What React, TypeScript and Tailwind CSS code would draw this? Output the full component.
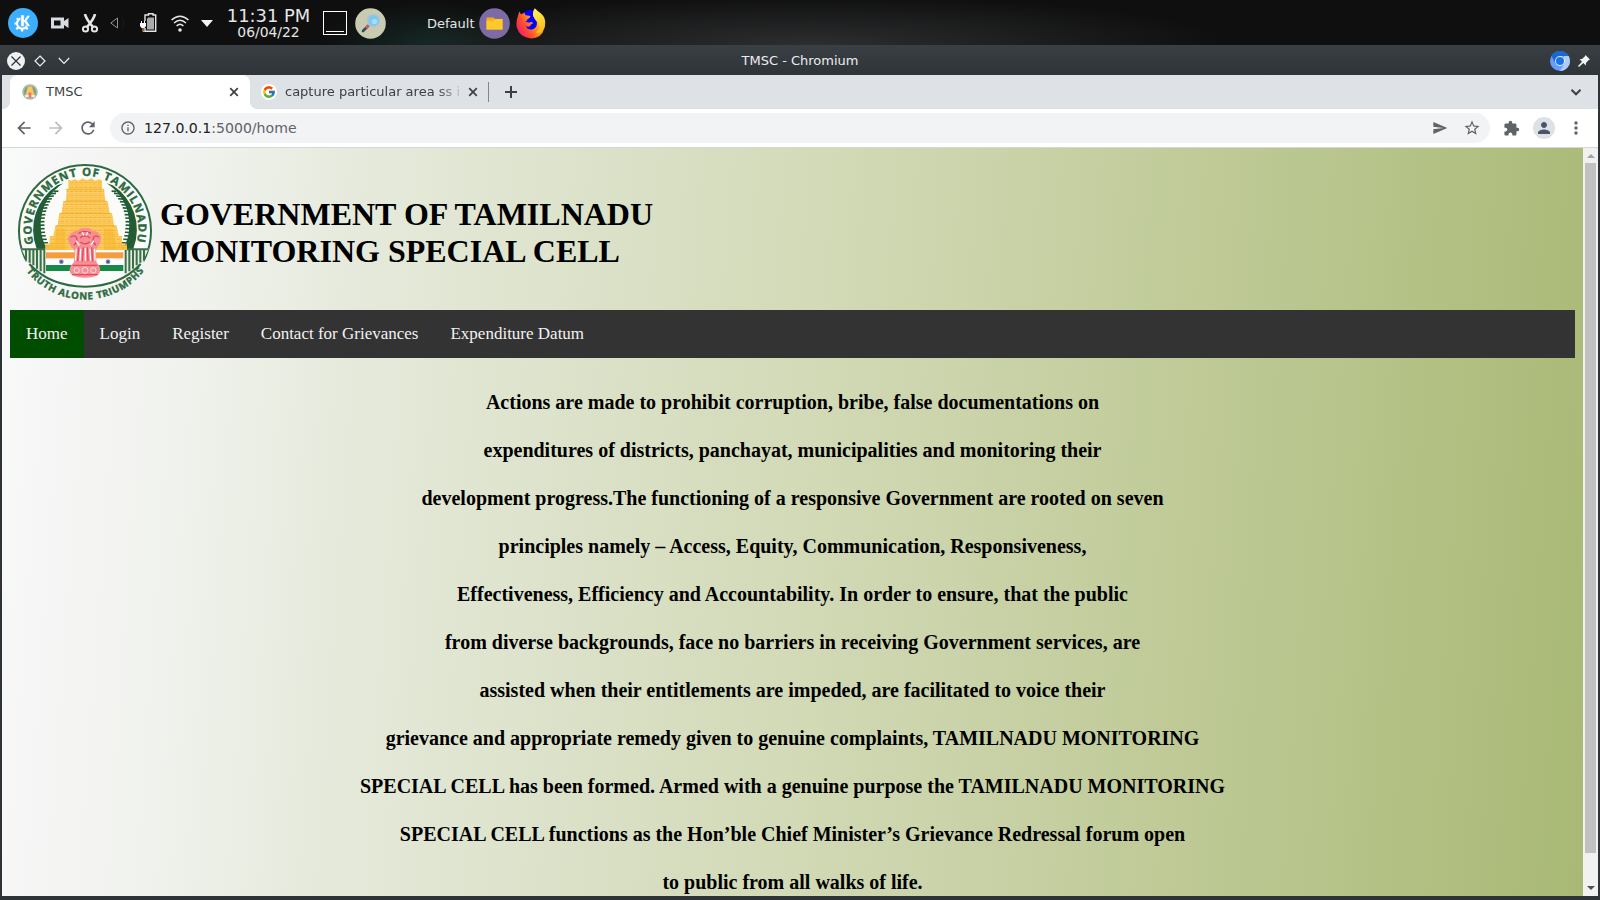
import React from "react";
import { MdArrowBack, MdArrowForward, MdRefresh, MdInfoOutline, MdSend, MdStarBorder, MdExtension, MdPerson, MdMoreVert } from "react-icons/md";
import { FcGoogle } from "react-icons/fc";

const lines = [
  "Actions are made to prohibit corruption, bribe, false documentations on",
  "expenditures of districts, panchayat, municipalities and monitoring their",
  "development progress.The functioning of a responsive Government are rooted on seven",
  "principles namely – Access, Equity, Communication, Responsiveness,",
  "Effectiveness, Efficiency and Accountability. In order to ensure, that the public",
  "from diverse backgrounds, face no barriers in receiving Government services, are",
  "assisted when their entitlements are impeded, are facilitated to voice their",
  "grievance and appropriate remedy given to genuine complaints, TAMILNADU MONITORING",
  "SPECIAL CELL has been formed. Armed with a genuine purpose the TAMILNADU MONITORING",
  "SPECIAL CELL functions as the Hon’ble Chief Minister’s Grievance Redressal forum open",
  "to public from all walks of life.",
];

const nav = ["Home", "Login", "Register", "Contact for Grievances", "Expenditure Datum"];

function spikes(side: number) {
  const out: string[] = [];
  for (let i = 0; i <= 17; i++) {
    const a = ((-50 + i * 4.2) * Math.PI) / 180;
    const x1 = 255 + side * Math.cos(a) * 146;
    const y1 = 240 + Math.sin(a) * 146;
    const len = 14 + i * 0.9;
    out.push(`M${x1.toFixed(1)} ${y1.toFixed(1)}L${(x1 - side * len).toFixed(1)} ${(y1 - 1).toFixed(1)}`);
  }
  return out.join("");
}

function Emblem({ className }: { className: string }) {
  return (
    <svg viewBox="51 37 411 417" className={className}>
      <defs>
        <path id="arcTop" d="M101 285A160 160 0 1 1 409 285" />
        <path id="arcBottom" d="M80 368A218 209 0 0 0 430 368" />
        <pattern id="stone" width="14" height="13" patternUnits="userSpaceOnUse">
          <rect width="14" height="13" fill="#fabb33" />
          <path d="M0 2H14M3 5V11M8 5V9M12 6V12" stroke="#fce0a0" strokeWidth="2" />
          <path d="M0 12H9" stroke="#eaa51d" strokeWidth="1.5" />
        </pattern>
      </defs>
      <circle cx="255" cy="240" r="178" fill="#fcfdfb" />
      <path d="M80 338A198 197 0 1 1 430 338" fill="#fbfcfa" stroke="#2c6a40" strokeWidth="6" />
      <path d="M64 300H130V372A190 190 0 0 1 82 340ZM446 300H380V372A190 190 0 0 0 428 340Z" fill="#e6ece1" />
      <path d="M66 302H136M374 302H444M78 302V334M89 302V342M100 302V350M111 302V360M122 302V368M133 302V374M432 302V334M421 302V342M410 302V350M399 302V360M388 302V368M377 302V374" stroke="#3a7048" strokeWidth="6" fill="none" />
      <path d="M88 346Q150 413 255 414Q360 413 422 346" fill="none" stroke="#2c6a40" strokeWidth="6" />
      <path d="M172 110A158 158 0 0 0 110 300H140A148 148 0 0 1 190 104ZM338 110A158 158 0 0 1 400 300H370A148 148 0 0 0 320 104Z" fill="#235d35" />
      <path d={spikes(-1) + spikes(1)} stroke="#235d35" strokeWidth="5" fill="none" />
      <path d="M205 92L214 96L224 91L235 96L248 89L260 95L274 89L286 96L298 91L306 96V122H312L316 158H323L329 193H336L342 230H350L356 262H366V290H381V304H136V290H149V262H160L166 230H173L178 193H185L190 158H198L200 122H205Z" fill="url(#stone)" />
      <path d="M136 284H160V304H136ZM356 284H381V304H356ZM170 240H196V304H160ZM312 240H338L352 304H312Z" fill="#f5b52a" opacity=".55" />
      <path d="M196 122H312M190 158H320M180 194H330M170 231H342" stroke="#eea91f" strokeWidth="3" opacity=".7" />
      <rect x="138" y="308" width="232" height="62" fill="#fff" />
      <rect x="138" y="311" width="232" height="18" fill="#f79b3f" />
      <rect x="138" y="349" width="232" height="18" fill="#168b45" />
      <circle cx="184" cy="339" r="7" fill="#7a84c2" /><circle cx="184" cy="339" r="3" fill="#343f99" />
      <circle cx="324" cy="339" r="7" fill="#7a84c2" /><circle cx="324" cy="339" r="3" fill="#343f99" />
      <path d="M232 248Q243 234 256 239Q270 234 278 248Q290 244 298 256Q306 264 302 276Q298 288 293 296Q284 306 287 320L290 342Q302 352 300 366Q299 386 255 387Q211 386 209 366Q208 352 221 342L224 320Q226 304 215 296Q206 284 204 274Q202 262 212 256Q222 245 232 248Z" fill="#f58f96" />
      <path d="M236 254Q254 242 273 254M240 267Q255 256 270 267M212 266Q224 256 230 268Q232 282 222 290M297 266Q286 256 280 268Q278 282 288 290M241 280Q256 292 269 279M236 296L233 338M250 296L247 338M262 296L264 338M275 296L278 338M218 350H292M216 378H294" stroke="#e6475a" strokeWidth="4" fill="none" />
      <path d="M246 250L252 260M263 250L259 261M228 276L238 290M282 276L272 290M229 300L226 336M242 300L240 336M256 298V336M270 300L272 336M284 300L285 336" stroke="#fff" strokeWidth="3.5" />
      <circle cx="230" cy="365" r="8" fill="none" stroke="#fbdadd" strokeWidth="3" />
      <circle cx="255" cy="365" r="9" fill="none" stroke="#fbdadd" strokeWidth="3" />
      <circle cx="280" cy="365" r="8" fill="none" stroke="#fbdadd" strokeWidth="3" />
      <g fill="#2c6a40" stroke="#2c6a40" strokeWidth="1.2" className="font-['Open_Sans',sans-serif] font-bold">
        <text fontSize="34"><textPath href="#arcTop" textLength="584" lengthAdjust="spacing">GOVERNMENT OF TAMILNADU</textPath></text>
        <text fontSize="29"><textPath href="#arcBottom" textLength="404" lengthAdjust="spacing">TRUTH ALONE TRIUMPHS</textPath></text>
      </g>
    </svg>
  );
}

function SmallEmblem() {
  return (
    <svg viewBox="0 0 16 16" className="size-4">
      <circle cx="8" cy="8" r="7.8" fill="#a9bda9" />
      <circle cx="8" cy="8" r="6" fill="#7f9f84" />
      <path d="M6 2.5H10L12.5 11H3.5Z" fill="#fbc85c" />
      <path d="M3 11H13V13.2H3Z" fill="#e8efe2" />
      <path d="M6.5 9Q8 7.5 9.5 9L9.3 13.5H6.7Z" fill="#f2737c" />
    </svg>
  );
}

function Kde() {
  return (
    <svg viewBox="0 0 30 30" className="size-[30px]">
      <circle cx="15" cy="15" r="15" fill="#3daefd" />
      <path d="M12.4 10.6A5.2 5.2 0 1 0 19 17.5" fill="none" stroke="#fff" strokeWidth="2.2" />
      <path d="M14 21V23.5M10 19.5L8.3 21.3M8.5 15.5H6.5M10.3 11.8L8.8 10.3M18 19.5L19.7 21.3" stroke="#fff" strokeWidth="2.2" />
      <path d="M12.8 7H16.2V12L19.2 7.4H22.4L18.8 12.8L22.4 18.2H18.9L16.2 14V18.6H12.8Z" fill="#fff" stroke="#3daefd" strokeWidth=".5" />
    </svg>
  );
}

function Firefox() {
  return (
    <svg viewBox="0 0 30 31" className="h-[31px] w-[30px]">
      <defs>
        <linearGradient id="fox" x1="1" y1="0.2" x2="0" y2="0.8">
          <stop offset="0" stopColor="#fff44f" /><stop offset=".35" stopColor="#ffa41a" /><stop offset=".65" stopColor="#ff4f2d" /><stop offset="1" stopColor="#f0157c" />
        </linearGradient>
        <linearGradient id="flame" x1="0.4" y1="0" x2="0.7" y2="1"><stop offset="0" stopColor="#fff44f" /><stop offset="1" stopColor="#ffb41c" /></linearGradient>
      </defs>
      <circle cx="15" cy="15" r="13" fill="#0800ff" />
      <path d="M3.5 3.5Q4 5.5 5.5 6.5Q7 5 8.8 4.7Q8 6.8 11 7.6Q14 7.5 14.4 8.6Q14 10.2 11.5 11.2Q11 13 9.5 13.6Q12 15 14.4 14.2Q16.8 13.8 17 15.3Q15 16 14.2 17.8Q12.5 19.7 9.8 18Q11.8 22.6 17 21.2Q22 19.4 20.6 13L26 9Q29.8 15 28.4 20Q25.5 30.5 15 30.5Q3.5 29.5 .7 19Q-.2 12.5 2 8Q2.4 5 3.5 3.5Z" fill="url(#fox)" />
      <path d="M18.8.2Q21 2.5 25 5.5Q31 11 28.5 19Q26 25 20 25Q25 21 22.4 15Q19 12.5 17.2 8.2Q16.2 3.6 18.8.2Z" fill="url(#flame)" />
    </svg>
  );
}

function Taskbar() {
  return (
    <div className="flex h-[45px] w-full shrink-0 items-center bg-[#0f0f0f] pt-px pl-2 font-['DejaVu_Sans',sans-serif] text-[#e6e6e6] bg-[radial-gradient(ellipse_420px_50px_at_810px_45px,#2c2e2f,transparent),radial-gradient(ellipse_110px_42px_at_430px_45px,#142825,transparent)]">
      <Kde />
      <svg viewBox="0 0 18 12" className="ml-[13px] h-3 w-[18px]"><path fillRule="evenodd" d="M0 .5H13V4L17.5 1V11L13 8V11.5H0ZM3 3.5V8.5H9.5V3.5Z" fill="#d6dce2" /></svg>
      <svg viewBox="0 0 16 19" className="ml-[13px] h-[19px] w-4" fill="none" stroke="#e6e6e6" strokeWidth="2"><path d="M3 0Q4 5 11 13M13 0Q12 5 5 13" strokeWidth="2.6" /><circle cx="3.5" cy="15" r="2.6" /><circle cx="12.5" cy="15" r="2.6" /></svg>
      <svg viewBox="0 0 18 16" className="ml-3 h-4 w-[18px]" fill="none"><path d="M7.5 3L.8 8L7.5 13Z" stroke="#929292" /><path d="M12 3Q16 8 12 13" stroke="#1d1d1d" /></svg>
      <svg viewBox="0 0 17 20" className="ml-3 h-5 w-[17px]"><path d="M5 8V2H8.5V.8H13V2H15.7V18.3H5V15" fill="none" stroke="#e6e6e6" strokeWidth="1.4" /><path d="M8 4.5H14V16.5H7V6Z" fill="#aaa" /><path d="M0 10H1V8H2V10H4V8H5V10H6V13L4.5 15H1.5L0 13Z" fill="#fff" /><path d="M3 15V18.5H5" stroke="#e9b36b" fill="none" /></svg>
      <svg viewBox="0 0 18 17" className="ml-3.5 h-[17px] w-[18px]" fill="none" stroke="#e6e6e6" strokeWidth="1.5"><path d="M.5 5Q9-2.5 17.5 5M3 8Q9 2.5 15 8M5.6 11Q9 7.5 12.4 11" /><circle cx="9" cy="15" r="1.8" fill="#e6e6e6" stroke="none" /></svg>
      <svg viewBox="0 0 12 7" className="ml-[12px] h-[7px] w-3"><path d="M0 0H12L6 7Z" fill="#f4f4f4" /></svg>
      <div className="ml-[13px] flex w-[85px] flex-col items-center whitespace-nowrap">
        <span className="text-[17.9px] leading-[18px]">11:31 PM</span>
        <span className="text-[13.9px] leading-[14px]">06/04/22</span>
      </div>
      <div className="ml-3 flex h-6 w-6 items-end justify-center border border-white pb-[2px]"><div className="h-px w-[18px] bg-white" /></div>
      <svg viewBox="0 0 31 31" className="ml-2 size-[31px]"><circle cx="15.5" cy="15.5" r="15.3" fill="#c9cbb1" /><path d="M8 23L13 18" stroke="#34495e" strokeWidth="2.6" strokeLinecap="round" /><path d="M11 20L14 17" stroke="#d85a4a" strokeWidth="2.4" /><circle cx="18.5" cy="12.5" r="6" fill="#7cc7f3" stroke="#a9c7d1" strokeWidth="1.6" /><circle cx="19.5" cy="13.5" r="2.6" fill="#a8ddfb" /></svg>
      <span className="ml-[41px] w-[49px] pt-px text-[13px]">Default</span>
      <svg viewBox="0 0 31 31" className="ml-[3px] size-[31px]"><circle cx="15.5" cy="15.5" r="15.3" fill="#7d6ba5" /><path d="M7.5 9.5H14.5L16 11H23.5V21.5H7.5Z" fill="#f8a91d" /><path d="M7.5 12.5H14L16 11H23.5V21.5H7.5Z" fill="#ffca28" /></svg>
      <div className="ml-[6px]"><Firefox /></div>
    </div>
  );
}

function TitleBar() {
  return (
    <div className="relative flex h-[30px] shrink-0 items-center justify-center bg-linear-to-b from-[#3a3f44] to-[#2f3439] pt-0.5 font-['DejaVu_Sans',sans-serif] text-[13px] text-[#eceeef]">
      <div className="absolute left-[7px] flex items-center">
        <svg viewBox="0 0 18 18" className="size-[18px]"><circle cx="9" cy="9" r="9" fill="#eff0f1" /><path d="M4.5 4.5L13.5 13.5M13.5 4.5L4.5 13.5" stroke="#2c3135" strokeWidth="1.2" /></svg>
        <svg viewBox="0 0 12 12" className="ml-[9px] size-3" fill="none" stroke="#eff0f1" strokeWidth="1.2"><path d="M6 1L11 6L6 11L1 6Z" /></svg>
        <svg viewBox="0 0 12 8" className="ml-3 h-2 w-3" fill="none" stroke="#eff0f1" strokeWidth="1.2"><path d="M.8 1L6 6.5L11.2 1" /></svg>
      </div>
      <span>TMSC - Chromium</span>
      <div className="absolute right-2.5 flex items-center gap-2">
        <svg viewBox="0 0 20 20" className="size-5"><circle cx="10" cy="10" r="10" fill="#669df6" /><path d="M1.4 5A10 10 0 0 1 18.6 5H10L6 13Z" fill="#1967d2" /><path d="M18.6 5A10 10 0 0 1 10 20L14.5 12.2L14 5Z" fill="#aecbfa" /><circle cx="10" cy="10" r="5" fill="#fff" opacity=".85" /><circle cx="10" cy="10" r="4" fill="#1a73e8" /></svg>
        <svg viewBox="0 0 12 12" className="size-3"><path d="M7.5 0L12 4.5L10.7 5L8 8L7.8 10.4L5.3 8L1 12L0 11L4 6.8L1.6 4.3L4 4L7 1.3Z" fill="#f2f3f3" /></svg>
      </div>
    </div>
  );
}

function CloseIcon() {
  return (
    <svg viewBox="0 0 14 14" className="size-3.5 shrink-0" stroke="#3c4043" strokeWidth="1.7"><path d="M3.2 3.2L10.8 10.8M10.8 3.2L3.2 10.8" /></svg>
  );
}

function Tabs() {
  return (
    <div className="flex h-[34px] shrink-0 items-stretch bg-[#dee1e6] pl-2 font-['DejaVu_Sans',sans-serif] text-[13px] text-[#3c4043]">
      <div className="relative flex w-60 items-center rounded-t-lg bg-white pl-3 pr-[9px]">
        <div className="absolute bottom-0 -left-2 size-2 bg-[radial-gradient(circle_at_0_0,transparent_8px,#fff_8.5px)]" />
        <div className="absolute bottom-0 -right-2 size-2 bg-[radial-gradient(circle_at_100%_0,transparent_8px,#fff_8.5px)]" />
        <SmallEmblem />
        <span className="ml-2 grow">TMSC</span>
        <CloseIcon />
      </div>
      <div className="flex w-[238px] items-center pr-[8px] pl-[11px]">
        <div className="flex size-4 items-center justify-center rounded-full bg-white"><FcGoogle className="size-[14px]" /></div>
        <span className="ml-2 min-w-0 grow whitespace-nowrap mask-r-from-84% mask-r-to-99%">capture particular area ss i</span>
        <CloseIcon />
      </div>
      <div className="my-[7px] w-px bg-[#80868b]" />
      <div className="flex grow items-center justify-between pr-[15px] pl-[15px]">
        <svg viewBox="0 0 14 14" className="size-3.5" stroke="#3c4043" strokeWidth="2"><path d="M7 1V13M1 7H13" /></svg>
        <svg viewBox="0 0 14 10" className="h-2.5 w-3.5" fill="none" stroke="#3c4043" strokeWidth="2"><path d="M2.5 2.8L7 7.3L11.5 2.8" /></svg>
      </div>
    </div>
  );
}

function Toolbar() {
  return (
    <div className="flex h-[39px] shrink-0 items-center border-b border-[#d5d7da] bg-white pl-3 pr-3 font-['DejaVu_Sans',sans-serif] text-[14.1px] text-[#5f6368]">
      <MdArrowBack className="size-5" />
      <MdArrowForward className="ml-3 size-5 text-[#bcbec1]" />
      <MdRefresh className="ml-3 size-5" />
      <div className="ml-3 flex h-[30px] grow items-center rounded-full bg-[#f1f3f4] pl-2.5 pr-[9px]">
        <MdInfoOutline className="size-4" />
        <span className="ml-2 grow pt-0.5"><span className="text-[#202124]">127.0.0.1</span>:5000/home</span>
        <MdSend className="size-4" />
        <MdStarBorder className="ml-[15px] size-[18px]" />
      </div>
      <MdExtension className="ml-[13px] size-[17px]" />
      <div className="ml-[13px] flex size-[22px] items-center justify-center rounded-full bg-[#dee1e6]"><MdPerson className="size-[18px] text-[#4a5568]" /></div>
      <MdMoreVert className="ml-[11px] size-5" />
    </div>
  );
}

export default function App() {
  return (
    <div className="flex h-[900px] w-[1600px] flex-col overflow-hidden bg-[#2e3338]">
      <Taskbar />
      <TitleBar />
      <div className="mx-0.5 flex min-h-0 grow flex-col pb-1">
        <Tabs />
        <Toolbar />
        <div className="flex min-h-0 grow">
          <main className="min-w-0 grow overflow-hidden bg-[linear-gradient(94deg,#f9fafa_0%,#f6f6f6_4%,#f0f2ed_12%,#e6eadc_22%,#d1d9b5_52%,#bfca97_74%,#a9b975_100%)] px-2 font-['Liberation_Serif',serif] text-black">
            <header className="flex h-[162px] items-center pl-[7px]">
              <Emblem className="mt-[13px] h-[139px] w-[137px] shrink-0 self-start" />
              <h1 className="ml-[6px] mt-[7px] text-[32px] leading-[37px] font-bold">GOVERNMENT OF TAMILNADU<br />MONITORING SPECIAL CELL</h1>
            </header>
            <nav className="flex h-12 bg-[#333] text-[17px] text-[#f2f2f2]">
              {nav.map((n, i) => (
                <a key={n} className={i === 0 ? "flex items-center bg-[#004d00] px-4" : "flex items-center px-4"}>{n}</a>
              ))}
            </nav>
            <section className="mt-5 text-center text-[20px] font-bold leading-[48px] whitespace-nowrap">
              {lines.map((l) => <p key={l}>{l}</p>)}
            </section>
          </main>
          <div className="flex w-[15px] shrink-0 flex-col items-center bg-[#f1f1f1]">
            <div className="flex h-[15px] items-center"><svg viewBox="0 0 8 4" className="h-1 w-2"><path d="M4 0L8 4H0Z" fill="#a3a3a3" /></svg></div>
            <div className="h-[690px] w-[11px] bg-[#c1c1c1]" />
            <div className="flex grow items-end pb-[6px]"><svg viewBox="0 0 8 4" className="h-1 w-2"><path d="M0 0H8L4 4Z" fill="#505050" /></svg></div>
          </div>
        </div>
      </div>
    </div>
  );
}
